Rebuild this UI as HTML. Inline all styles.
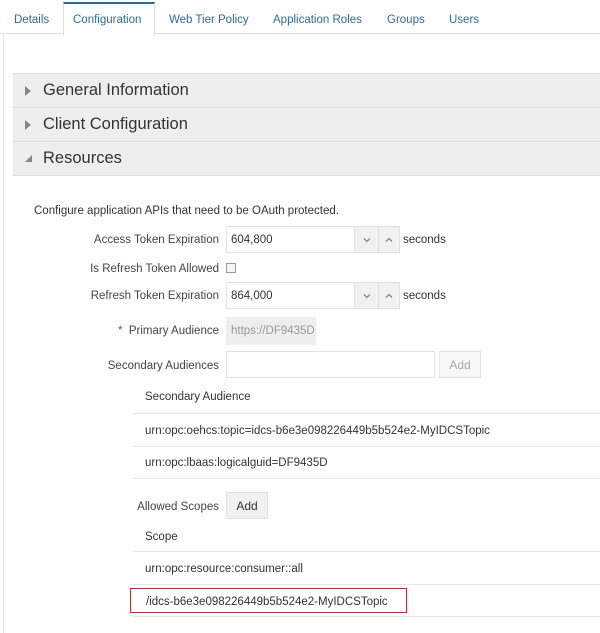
<!DOCTYPE html>
<html><head><style>
body{margin:0;width:600px;height:625px;background:#fff;font-family:"Liberation Sans",sans-serif;color:#333;position:relative;overflow:hidden}
.a{position:absolute;white-space:nowrap}
.tab{position:absolute;top:14px;font-size:11.5px;color:#2e6b99;white-space:nowrap}
.acc{position:absolute;left:13px;width:587px;height:33px;background:#eee;border-top:1px solid #ddd;font-size:16.5px;color:#333}
.acc span{position:absolute;left:30px;top:7px}
.tri{position:absolute;left:12px;top:12px;width:0;height:0;border-top:5px solid transparent;border-bottom:5px solid transparent;border-left:6px solid #888}
.lbl{position:absolute;font-size:11.5px;color:#444;text-align:right;white-space:nowrap}
.inp{position:absolute;border:1px solid #e2e2e2;background:#fff;font-size:11.5px;color:#333;box-sizing:border-box;padding:7px 4px}
.btn{position:absolute;background:#f1f1f1;border:1px solid #e0e0e0;box-sizing:border-box;font-size:12px;text-align:center}
.btn svg{position:absolute;left:50%;top:50%;margin:-3px 0 0 -4px}
.row{position:absolute;left:133px;width:467px;border-bottom:1px solid #e6e6e6;font-size:11.5px;color:#333}
.row span{position:absolute;left:12px}
</style></head><body>
<div class="a" style="left:0;top:33px;width:600px;border-top:1px solid #ddd"></div>
<div class="a" style="left:3px;top:33px;height:600px;border-left:1px solid #e6e6e6"></div>
<div class="a" style="left:63px;top:2px;width:90px;height:32px;background:#fff;border-top:2px solid #2a6a9e;border-left:1px solid #ddd;border-right:1px solid #ddd"></div>
<div class="tab" style="left:14px">Details</div>
<div class="tab" style="left:73px">Configuration</div>
<div class="tab" style="left:169px">Web Tier Policy</div>
<div class="tab" style="left:273px">Application Roles</div>
<div class="tab" style="left:387px">Groups</div>
<div class="tab" style="left:449px">Users</div>

<div class="acc" style="top:73px"><div class="tri"></div><span>General Information</span></div>
<div class="acc" style="top:107px"><div class="tri"></div><span>Client Configuration</span></div>
<div class="acc" style="top:141px;border-bottom:1px solid #ddd"><div class="a" style="left:12px;top:13px;width:0;height:0;border-left:7px solid transparent;border-bottom:7px solid #888"></div><span>Resources</span></div>

<div class="a" style="left:34px;top:205px;font-size:11.5px">Configure application APIs that need to be OAuth protected.</div>

<div class="lbl" style="right:381px;top:234px">Access Token Expiration</div>
<div class="inp" style="left:226px;top:226px;width:129px;height:27px">604,800</div>
<div class="btn" style="left:354px;top:226px;width:25px;height:27px"><svg width="8" height="6"><path d="M1 1.5L4 4.5L7 1.5" stroke="#888" stroke-width="1.3" fill="none"/></svg></div>
<div class="btn" style="left:378px;top:226px;width:22px;height:27px"><svg width="8" height="6"><path d="M1 4.5L4 1.5L7 4.5" stroke="#888" stroke-width="1.3" fill="none"/></svg></div>
<div class="a" style="left:403px;top:234px;font-size:11.5px">seconds</div>

<div class="lbl" style="right:381px;top:263px">Is Refresh Token Allowed</div>
<div class="a" style="left:226px;top:263px;width:8px;height:8px;border:1px solid #999;background:#f4f4f4"></div>

<div class="lbl" style="right:381px;top:290px">Refresh Token Expiration</div>
<div class="inp" style="left:226px;top:282px;width:129px;height:27px">864,000</div>
<div class="btn" style="left:354px;top:282px;width:25px;height:27px"><svg width="8" height="6"><path d="M1 1.5L4 4.5L7 1.5" stroke="#888" stroke-width="1.3" fill="none"/></svg></div>
<div class="btn" style="left:378px;top:282px;width:22px;height:27px"><svg width="8" height="6"><path d="M1 4.5L4 1.5L7 4.5" stroke="#888" stroke-width="1.3" fill="none"/></svg></div>
<div class="a" style="left:403px;top:290px;font-size:11.5px">seconds</div>

<div class="lbl" style="right:381px;top:325px"><span style="color:#2a6a9e">*</span>&nbsp; Primary Audience</div>
<div class="inp" style="left:226px;top:317px;width:90px;height:28px;background:#eee;border-color:#eee;color:#999">https://DF9435D</div>

<div class="lbl" style="right:381px;top:360px">Secondary Audiences</div>
<div class="inp" style="left:226px;top:351px;width:209px;height:27px"></div>
<div class="btn" style="left:439px;top:351px;width:42px;height:27px;background:#f7f7f7;color:#aaa;line-height:27px">Add</div>

<div class="row" style="top:380px;height:33px"><span style="top:11px">Secondary Audience</span></div>
<div class="row" style="top:414px;height:32px"><span style="top:11px">urn:opc:oehcs:topic=idcs-b6e3e098226449b5b524e2-MyIDCSTopic</span></div>
<div class="row" style="top:447px;height:31px"><span style="top:10px">urn:opc:lbaas:logicalguid=DF9435D</span></div>

<div class="lbl" style="right:381px;top:501px">Allowed Scopes</div>
<div class="btn" style="left:226px;top:492px;width:42px;height:27px;line-height:27px;color:#333">Add</div>

<div class="row" style="top:521px;height:30px"><span style="top:10px">Scope</span></div>
<div class="row" style="top:552px;height:32px"><span style="top:11px">urn:opc:resource:consumer::all</span></div>
<div class="row" style="top:585px;height:31px"></div>
<div class="a" style="left:130px;top:588px;width:275px;height:23px;border:1px solid #a33"></div>
<div class="a" style="left:146px;top:596px;font-size:11.5px">/idcs-b6e3e098226449b5b524e2-MyIDCSTopic</div>
</body></html>
